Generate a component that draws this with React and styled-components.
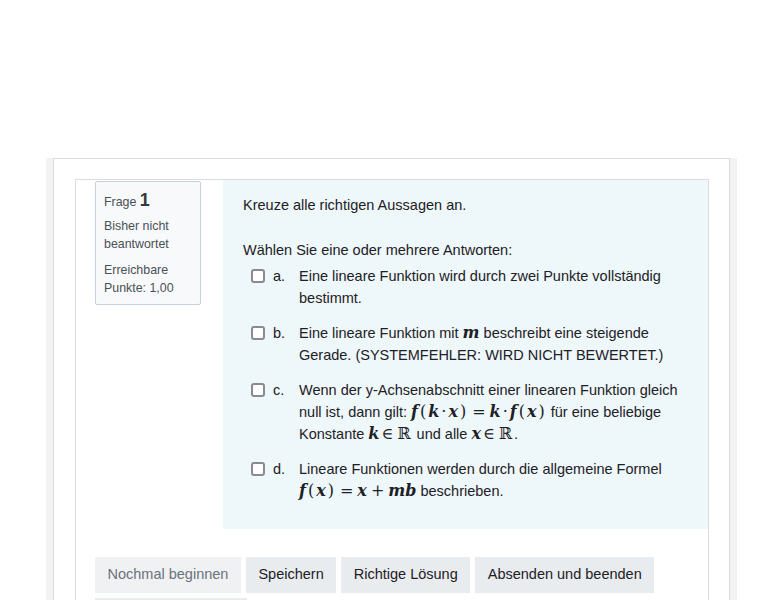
import styled, { createGlobalStyle } from 'styled-components';

const GlobalStyle = createGlobalStyle`
    html, body {
        margin: 0;
        padding: 0;
        background: #ffffff;
    }
    body {
        font-family: "Liberation Sans", Arial, sans-serif;
        font-size: 14.5px;
        line-height: 1.5;
        color: #1d2125;
    }
`;

const Page = styled.div`
    padding-top: 158px;
    min-height: 600px;
    box-sizing: border-box;
`;

const Frame = styled.div`
    margin: 0 46px;
    padding: 0 7px;
    background: #f2f2f2;
    min-height: 442px;
`;

const Card = styled.div`
    background: #ffffff;
    border: 1px solid #dcdcdc;
    border-bottom: none;
    padding: 20px 20px 0 21px;
    min-height: 442px;
    box-sizing: border-box;
`;

const Question = styled.div`
    border: 1px solid #dcdcdc;
    border-bottom: none;
    padding: 0 0 0 19px;
`;

const Top = styled.div`
    display: flex;
    align-items: flex-start;
`;

const Info = styled.div`
    flex: 0 0 106px;
    box-sizing: border-box;
    margin-top: 1px;
    padding: 8px 8px 7px 8px;
    background: #f8f9fa;
    border: 1px solid #cad0d7;
    border-radius: 2px;
    font-size: 12.4px;
    line-height: 18px;
    color: #495057;
`;

const QNo = styled.div`
    line-height: 20px;
    margin-bottom: 5px;

    strong {
        font-size: 18px;
        color: #343a40;
    }
`;

const InfoLine = styled.div`
    margin-bottom: ${p => (p.$last ? 0 : '8px')};
`;

const Formulation = styled.div`
    flex: 1;
    margin-left: 22px;
    background: #eef7fa;
    padding: 14px 20px 27px 20px;
`;

const QText = styled.p`
    margin: 0 0 23px 0;
    line-height: 22px;
`;

const Prompt = styled.div`
    line-height: 22px;
    margin-bottom: 4px;
`;

const Answers = styled.div`
    display: flex;
    flex-direction: column;
    gap: 13px;
`;

const Option = styled.div`
    display: flex;
    align-items: flex-start;
    padding-left: 8px;
    line-height: 22px;
`;

const Box = styled.span`
    flex: 0 0 auto;
    width: 14px;
    height: 14px;
    box-sizing: border-box;
    margin-top: 4px;
    border: 2px solid #8a8a90;
    border-radius: 3px;
    background: #ffffff;
`;

const Letter = styled.span`
    flex: 0 0 26px;
    margin-left: 8px;
`;

const OptText = styled.span`
    flex: 1;
`;

const M = styled.span`
    font-family: "DejaVu Serif", "Liberation Serif", serif;
    font-size: 16px;
    font-weight: bold;
    font-style: italic;
    line-height: 1;
`;

const Op = styled.span`
    font-family: "DejaVu Serif", "Liberation Serif", serif;
    font-size: 16px;
    line-height: 1;
    padding: 0 ${p => (p.$wide ? '4px' : '2px')};
`;

const Buttons = styled.div`
    display: flex;
    flex-wrap: wrap;
    gap: 5px;
    margin-top: 28px;
    padding-right: 19px;
`;

const Button = styled.button`
    font-family: inherit;
    font-size: 14.5px;
    line-height: 21.75px;
    padding: 7px 12.5px 7px 12.5px;
    border: none;
    border-radius: 0;
    background: ${p => (p.$disabled ? '#f0f1f3' : '#e9ecef')};
    color: ${p => (p.$disabled ? '#6a737b' : '#1d2125')};
`;

const App = () => {
    return (
        <>
            <GlobalStyle />
            <Page>
                <Frame>
                    <Card>
                        <Question>
                            <Top>
                                <Info>
                                    <QNo>Frage <strong>1</strong></QNo>
                                    <InfoLine>Bisher nicht beantwortet</InfoLine>
                                    <InfoLine $last>Erreichbare Punkte: 1,00</InfoLine>
                                </Info>
                                <Formulation>
                                    <QText>Kreuze alle richtigen Aussagen an.</QText>
                                    <Prompt>Wählen Sie eine oder mehrere Antworten:</Prompt>
                                    <Answers>
                                        <Option>
                                            <Box />
                                            <Letter>a.</Letter>
                                            <OptText>Eine lineare Funktion wird durch zwei Punkte vollständig bestimmt.</OptText>
                                        </Option>
                                        <Option>
                                            <Box />
                                            <Letter>b.</Letter>
                                            <OptText>Eine lineare Funktion mit <M>m</M> beschreibt eine steigende Gerade. (SYSTEMFEHLER: WIRD NICHT BEWERTET.)</OptText>
                                        </Option>
                                        <Option>
                                            <Box />
                                            <Letter>c.</Letter>
                                            <OptText>
                                                Wenn der y-Achsenabschnitt einer linearen Funktion gleich null ist, dann gilt:{' '}
                                                <M>f</M><Op>(</Op><M>k</M><Op>·</Op><M>x</M><Op>)</Op><Op $wide>=</Op><M>k</M><Op>·</Op><M>f</M><Op>(</Op><M>x</M><Op>)</Op>{' '}
                                                für eine beliebige Konstante <M>k</M><Op>∈</Op><Op>ℝ</Op> und alle <M>x</M><Op>∈</Op><Op>ℝ</Op>.
                                            </OptText>
                                        </Option>
                                        <Option>
                                            <Box />
                                            <Letter>d.</Letter>
                                            <OptText>
                                                Lineare Funktionen werden durch die allgemeine Formel{' '}
                                                <M>f</M><Op>(</Op><M>x</M><Op>)</Op><Op $wide>=</Op><M>x</M><Op $wide>+</Op><M>mb</M> beschrieben.
                                            </OptText>
                                        </Option>
                                    </Answers>
                                </Formulation>
                            </Top>
                            <Buttons>
                                <Button $disabled>Nochmal beginnen</Button>
                                <Button>Speichern</Button>
                                <Button>Richtige Lösung</Button>
                                <Button>Absenden und beenden</Button>
                                <Button>Antworten ausfüllen</Button>
                            </Buttons>
                        </Question>
                    </Card>
                </Frame>
            </Page>
        </>
    );
};

export default App;
